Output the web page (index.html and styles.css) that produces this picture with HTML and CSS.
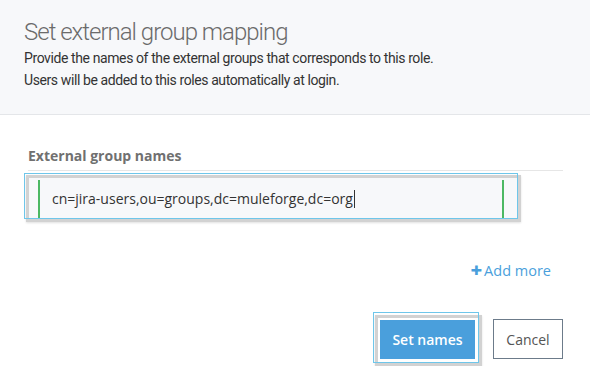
FILE: index.html
```html
<!DOCTYPE html>
<html lang="en">
<head>
 <meta charset="UTF-8">
 <meta name="viewport" content="width=device-width, initial-scale=1.0">
 <title>Set external group mapping</title>
 <link rel="stylesheet" href="styles.css">
</head>
<body>
 <div class="dialog-header">
 <h1>Set external group mapping</h1>
 <p>Provide the names of the external groups that corresponds to this role.<br>
 Users will be added to this roles automatically at login.</p>
 </div>

 <div class="dialog-body">
 <div class="field-label">External group names</div>

 <div class="focus-ring input-frame">
 <div class="input-value">cn=jira-users,ou=groups,dc=muleforge,dc=org<span class="caret"></span></div>
 </div>

 <div class="add-row">
 <a href="#" class="add-more"><span class="plus">+</span>Add more</a>
 </div>

 <div class="actions">
 <div class="focus-ring button-frame">
 <button class="primary">Set names</button>
 </div>
 <button class="secondary">Cancel</button>
 </div>
 </div>
</body>
</html>
```

FILE: styles.css
```css
body {
margin: 0;
font-family: 'Open Sans', sans-serif;
font-size: 14px;
color: #333;
background: #fff;
}
.dialog-header {
height: 96px;
padding: 18px 24px 0;
background: #f7f8fa;
border-bottom: 1px solid #e4e6e9;
}
.dialog-header h1 {
margin: 0;
font-family: Roboto, sans-serif;
font-weight: 300;
font-size: 24px;
line-height: 28px;
color: #6b6b6b;
letter-spacing: -1px;
}
.dialog-header p {
margin: 1px 0 0;
font-family: Roboto, sans-serif;
font-size: 14px;
line-height: 22px;
color: #333;
letter-spacing: -0.4px;
}
.dialog-body {
padding: 31px 27px 0 28px;
}
.field-label {
font-weight: 700;
line-height: 20px;
color: #707070;
padding-bottom: 4px;
border-bottom: 1px solid #e6e6e6;
}
.focus-ring {
position: relative;
border: 3px solid #d2d2d2;
box-shadow: 0 1px 2px rgba(0,0,0,0.12);
}
.focus-ring::after {
content: '';
position: absolute;
top: -5px;
left: -5px;
right: 0;
bottom: 0;
border: 1px solid #6ec6ea;
}
.input-frame {
margin: 4px 42px 0 -2px;
height: 41px;
background: #f7f8fa;
}
.input-frame::before,
.input-value::after {
content: '';
position: absolute;
top: 2px;
bottom: 0;
width: 2px;
background: #4cb863;
}
.input-frame::before {
left: 9px;
}
.input-value::after {
right: 14px;
}
.input-value {
padding: 1px 0 0 23px;
line-height: 40px;
color: #333;
}
.caret {
display: inline-block;
width: 1px;
height: 18px;
background: #333;
vertical-align: -4px;
margin-left: 1px;
}
.add-row {
display: flex;
justify-content: flex-end;
margin-top: 38px;
padding-right: 12px;
}
.add-more {
color: #4a9fdc;
text-decoration: none;
line-height: 20px;
font-size: 14.5px;
}
.plus {
font-weight: 800;
font-size: 20px;
margin-right: 2px;
vertical-align: -1px;
}
.actions {
display: flex;
justify-content: flex-end;
align-items: flex-start;
gap: 11px;
margin-top: 34px;
}
.button-frame {
padding: 2px 4px 4px 2px;
}
.button-frame::after {
top: -6px;
}
button {
font-family: 'Open Sans', sans-serif;
font-size: 14px;
height: 39px;
cursor: pointer;
}
.primary {
display: block;
width: 95px;
border: none;
background: #4a9fdc;
color: #fff;
font-weight: 600;
}
.secondary {
margin-top: 4px;
width: 70px;
height: 40px;
border: 1px solid #6c7b8a;
background: #fff;
color: #555;
}
```
